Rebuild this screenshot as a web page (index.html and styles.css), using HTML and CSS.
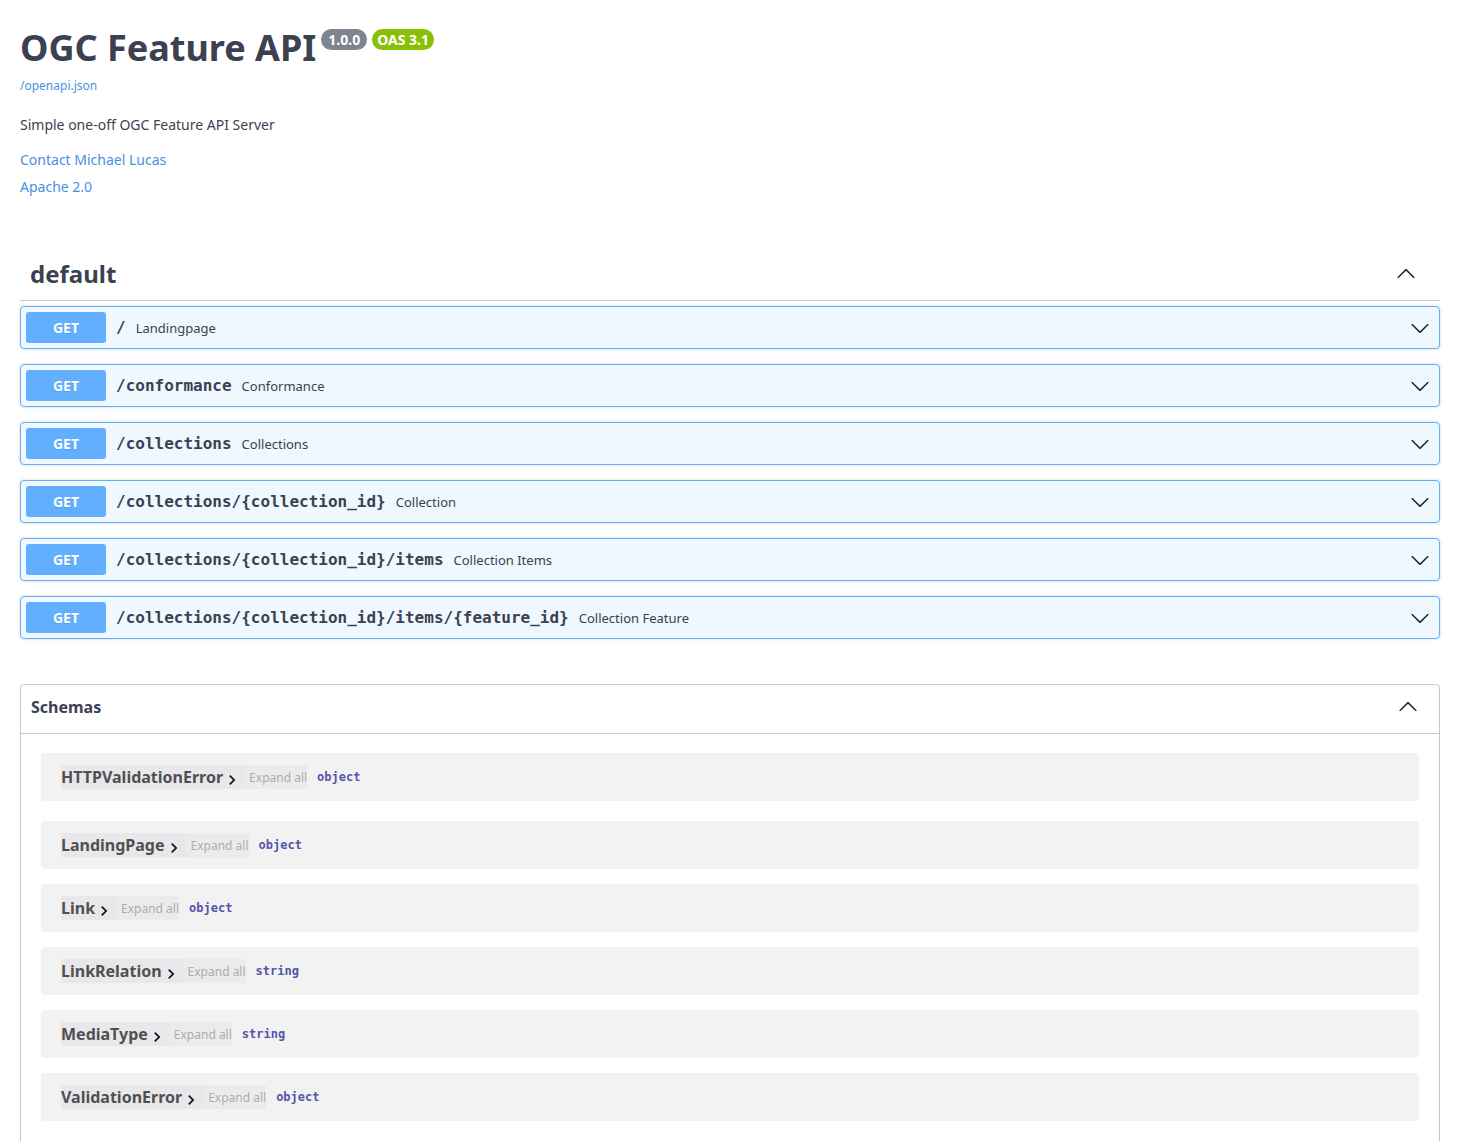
FILE: index.html
```html
<!DOCTYPE html>
<html lang="en">
<head>
<meta charset="utf-8">
<title>OGC Feature API - Swagger UI</title>
<link rel="stylesheet" href="styles.css">
</head>
<body>
<div class="wrapper">
  <div class="info">
    <div class="title-row">
      <h2 class="title">OGC Feature API</h2>
      <span class="badge badge-version">1.0.0</span>
      <span class="badge badge-oas">OAS 3.1</span>
    </div>
    <a class="link link-small" href="#">/openapi.json</a>
    <div class="description">Simple one-off OGC Feature API Server</div>
    <div class="contact"><a class="link" href="#">Contact Michael Lucas</a></div>
    <div class="license"><a class="link" href="#">Apache 2.0</a></div>
  </div>

  <div class="tag-section">
    <h3 class="opblock-tag">
      <span class="tag-name">default</span>
      <svg class="arrow" width="20" height="20" viewBox="0 0 20 20"><path transform="rotate(180 10 10)" d="M17.418 6.109c.272-.268.709-.268.979 0s.271.701 0 .969l-7.908 7.83c-.27.268-.707.268-.979 0l-7.908-7.83c-.27-.268-.27-.701 0-.969.271-.268.709-.268.979 0L10 13.25l7.418-7.141z"/></svg>
    </h3>

    <div class="opblock">
      <div class="summary">
        <span class="method">GET</span>
        <span class="path">/</span>
        <span class="desc">Landingpage</span>
        <svg class="arrow arrow-op" width="20" height="20" viewBox="0 0 20 20"><path d="M17.418 6.109c.272-.268.709-.268.979 0s.271.701 0 .969l-7.908 7.83c-.27.268-.707.268-.979 0l-7.908-7.83c-.27-.268-.27-.701 0-.969.271-.268.709-.268.979 0L10 13.25l7.418-7.141z"/></svg>
      </div>
    </div>
    <div class="opblock">
      <div class="summary">
        <span class="method">GET</span>
        <span class="path">/conformance</span>
        <span class="desc">Conformance</span>
        <svg class="arrow arrow-op" width="20" height="20" viewBox="0 0 20 20"><path d="M17.418 6.109c.272-.268.709-.268.979 0s.271.701 0 .969l-7.908 7.83c-.27.268-.707.268-.979 0l-7.908-7.83c-.27-.268-.27-.701 0-.969.271-.268.709-.268.979 0L10 13.25l7.418-7.141z"/></svg>
      </div>
    </div>
    <div class="opblock">
      <div class="summary">
        <span class="method">GET</span>
        <span class="path">/collections</span>
        <span class="desc">Collections</span>
        <svg class="arrow arrow-op" width="20" height="20" viewBox="0 0 20 20"><path d="M17.418 6.109c.272-.268.709-.268.979 0s.271.701 0 .969l-7.908 7.83c-.27.268-.707.268-.979 0l-7.908-7.83c-.27-.268-.27-.701 0-.969.271-.268.709-.268.979 0L10 13.25l7.418-7.141z"/></svg>
      </div>
    </div>
    <div class="opblock">
      <div class="summary">
        <span class="method">GET</span>
        <span class="path">/collections/{collection_id}</span>
        <span class="desc">Collection</span>
        <svg class="arrow arrow-op" width="20" height="20" viewBox="0 0 20 20"><path d="M17.418 6.109c.272-.268.709-.268.979 0s.271.701 0 .969l-7.908 7.83c-.27.268-.707.268-.979 0l-7.908-7.83c-.27-.268-.27-.701 0-.969.271-.268.709-.268.979 0L10 13.25l7.418-7.141z"/></svg>
      </div>
    </div>
    <div class="opblock">
      <div class="summary">
        <span class="method">GET</span>
        <span class="path">/collections/{collection_id}/items</span>
        <span class="desc">Collection Items</span>
        <svg class="arrow arrow-op" width="20" height="20" viewBox="0 0 20 20"><path d="M17.418 6.109c.272-.268.709-.268.979 0s.271.701 0 .969l-7.908 7.83c-.27.268-.707.268-.979 0l-7.908-7.83c-.27-.268-.27-.701 0-.969.271-.268.709-.268.979 0L10 13.25l7.418-7.141z"/></svg>
      </div>
    </div>
    <div class="opblock">
      <div class="summary">
        <span class="method">GET</span>
        <span class="path">/collections/{collection_id}/items/{feature_id}</span>
        <span class="desc">Collection Feature</span>
        <svg class="arrow arrow-op" width="20" height="20" viewBox="0 0 20 20"><path d="M17.418 6.109c.272-.268.709-.268.979 0s.271.701 0 .969l-7.908 7.83c-.27.268-.707.268-.979 0l-7.908-7.83c-.27-.268-.27-.701 0-.969.271-.268.709-.268.979 0L10 13.25l7.418-7.141z"/></svg>
      </div>
    </div>
  </div>

  <section class="models">
    <h4 class="models-head">
      <span>Schemas</span>
      <svg class="arrow arrow-models" width="20" height="20" viewBox="0 0 20 20"><path transform="rotate(180 10 10)" d="M17.418 6.109c.272-.268.709-.268.979 0s.271.701 0 .969l-7.908 7.83c-.27.268-.707.268-.979 0l-7.908-7.83c-.27-.268-.27-.701 0-.969.271-.268.709-.268.979 0L10 13.25l7.418-7.141z"/></svg>
    </h4>
    <div class="model-list">
      <div class="model-container model-first">
        <span class="model-btn"><span class="model-title">HTTPValidationError</span><svg class="toggle" width="20" height="20" viewBox="0 0 24 24"><path d="M10 6L8.59 7.41 13.17 12l-4.58 4.59L10 18l6-6z"/></svg></span><span class="expand">Expand all</span><span class="prop-type">object</span>
      </div>
      <div class="model-container">
        <span class="model-btn"><span class="model-title">LandingPage</span><svg class="toggle" width="20" height="20" viewBox="0 0 24 24"><path d="M10 6L8.59 7.41 13.17 12l-4.58 4.59L10 18l6-6z"/></svg></span><span class="expand">Expand all</span><span class="prop-type">object</span>
      </div>
      <div class="model-container">
        <span class="model-btn"><span class="model-title">Link</span><svg class="toggle" width="20" height="20" viewBox="0 0 24 24"><path d="M10 6L8.59 7.41 13.17 12l-4.58 4.59L10 18l6-6z"/></svg></span><span class="expand">Expand all</span><span class="prop-type">object</span>
      </div>
      <div class="model-container">
        <span class="model-btn"><span class="model-title">LinkRelation</span><svg class="toggle" width="20" height="20" viewBox="0 0 24 24"><path d="M10 6L8.59 7.41 13.17 12l-4.58 4.59L10 18l6-6z"/></svg></span><span class="expand">Expand all</span><span class="prop-type">string</span>
      </div>
      <div class="model-container">
        <span class="model-btn"><span class="model-title">MediaType</span><svg class="toggle" width="20" height="20" viewBox="0 0 24 24"><path d="M10 6L8.59 7.41 13.17 12l-4.58 4.59L10 18l6-6z"/></svg></span><span class="expand">Expand all</span><span class="prop-type">string</span>
      </div>
      <div class="model-container">
        <span class="model-btn"><span class="model-title">ValidationError</span><svg class="toggle" width="20" height="20" viewBox="0 0 24 24"><path d="M10 6L8.59 7.41 13.17 12l-4.58 4.59L10 18l6-6z"/></svg></span><span class="expand">Expand all</span><span class="prop-type">object</span>
      </div>
    </div>
  </section>
</div>
</body>
</html>
```

FILE: styles.css
```css
html, body {
  margin: 0;
  padding: 0;
  background: #fff;
}
body {
  font-family: "Noto Sans", "Open Sans", sans-serif;
  color: #3b4151;
}
.wrapper {
  box-sizing: border-box;
  max-width: 1460px;
  padding: 20px 20px 40px;
}

/* info */
.info {
  display: flex;
  flex-direction: column;
  align-items: flex-start;
}
.title-row {
  display: flex;
  align-items: flex-start;
}
.title {
  margin: 3px 0 0;
  font-size: 36px;
  font-weight: 700;
  line-height: 49px;
  color: #3b4151;
}
.badge {
  margin-top: 9px;
  margin-left: 5px;
  padding: 1px 7px;
  border-radius: 57px;
  color: #fff;
  font-size: 14px;
  font-weight: 700;
  line-height: 19px;
}
.badge-version {
  background: #7d8492;
}
.badge-oas {
  background: #89bf04;
  padding: 1px 5px;
}
.link {
  color: #4990e2;
  text-decoration: none;
  font-size: 14px;
  line-height: 20px;
}
.link-small {
  font-size: 12px;
  line-height: 16px;
  margin-top: 6px;
}
.description {
  margin-top: 21px;
  font-size: 14px;
  line-height: 20px;
  color: #3b4151;
}
.contact {
  margin-top: 14px;
  line-height: 20px;
}
.license {
  margin-top: 6px;
  line-height: 20px;
}

/* tag */
.tag-section {
  margin-top: 51px;
}
.opblock-tag {
  display: flex;
  align-items: center;
  justify-content: space-between;
  margin: 0 0 5px;
  padding: 10px 24px 10px 10px;
  border-bottom: 1px solid rgba(59, 65, 81, 0.3);
  font-size: 24px;
  font-weight: 700;
  line-height: 32px;
  color: #3b4151;
}
.arrow {
  fill: #222;
  flex: none;
}

/* operations */
.opblock {
  margin: 0 0 15px;
  border: 1px solid #61affe;
  border-radius: 4px;
  background: rgba(97, 175, 254, 0.1);
  box-shadow: 0 0 3px rgba(0, 0, 0, 0.19);
}
.summary {
  display: flex;
  align-items: center;
  padding: 5px;
}
.method {
  min-width: 80px;
  padding: 6px 0;
  border-radius: 3px;
  background: #61affe;
  color: #fff;
  text-align: center;
  font-size: 14px;
  font-weight: 700;
  line-height: 19px;
  text-shadow: 0 1px 0 rgba(0, 0, 0, 0.1);
}
.path {
  padding: 0 10px;
  font-family: "DejaVu Sans Mono", monospace;
  font-size: 16px;
  font-weight: 700;
  color: #3b4151;
}
.desc {
  flex: 1;
  font-size: 13px;
  color: #3b4151;
}
.arrow-op {
  margin-right: 4px;
}

/* models */
.models {
  margin-top: 45px;
  border: 1px solid rgba(59, 65, 81, 0.3);
  border-radius: 4px;
}
.models-head {
  display: flex;
  align-items: center;
  justify-content: space-between;
  margin: 0;
  padding: 8px 21px 12px 10px;
  border-bottom: 1px solid rgba(59, 65, 81, 0.3);
  font-size: 16px;
  font-weight: 700;
  line-height: 28px;
  color: #3b4151;
}
.model-list {
  padding: 19px 0 15px;
}
.model-container {
  display: flex;
  align-items: center;
  margin: 0 20px 15px;
  padding: 12px 20px;
  border-radius: 4px;
  background: rgba(0, 0, 0, 0.05);
}
.model-first {
  margin-bottom: 20px;
}
.model-btn {
  display: inline-flex;
  align-items: center;
  height: 24px;
  padding-right: 2px;
  background: #e8e8eb;
}
.model-title {
  font-size: 16px;
  font-weight: 700;
  line-height: 24px;
  color: #505050;
}
.toggle {
  fill: #111;
  margin-top: 6px;
  margin-left: -1px;
}
.expand {
  height: 24px;
  padding: 0 0 0 5px;
  background: #ebebeb;
  font-size: 12px;
  line-height: 26px;
  color: #adadad;
}
.prop-type {
  margin-left: 10px;
  font-family: "DejaVu Sans Mono", monospace;
  font-size: 12px;
  font-weight: 700;
  color: #55a;
}
```
